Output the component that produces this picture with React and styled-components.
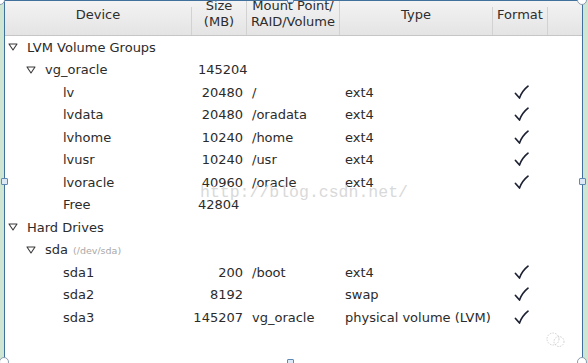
import React from "react";
import styled, { createGlobalStyle } from "styled-components";

const Global = createGlobalStyle`
  html, body { margin: 0; padding: 0; background: #cfe6d3; }
  body { font-family: "DejaVu Sans", "Noto Sans", sans-serif; }
`;

const cols = "187px 55px 93px 153px 55px 1fr";

const Page = styled.div`
  position: relative;
  width: 588px;
  height: 363px;
  background: #cfe6d3;
  padding: 0 5px 0 4px;
  box-sizing: border-box;
  overflow: hidden;
`;

const Panel = styled.div`
  position: relative;
  height: 100%;
  background: #fff;
  border-left: 1px solid #41709c;
  border-right: 1px solid #41709c;
  border-top: 1px solid #41709c;
  box-sizing: border-box;
  overflow: hidden;
`;

const Header = styled.div`
  display: grid;
  grid-template-columns: ${cols};
  grid-template-rows: 34px;
  background: linear-gradient(#f3f3f3, #e4e4e4);
  border-bottom: 1px solid #c6c6c6;
  overflow: hidden;
`;

const HeadCell = styled.div`
  text-align: center;
  font-size: 13px;
  line-height: 16px;
  color: #2d2d2d;
  border-right: ${(p) => (p.$last ? "none" : "1px solid #d2d2d2")};
  white-space: pre;
  margin-top: ${(p) => p.$top ?? 6}px;
`;

const Body = styled.div`
  display: grid;
  grid-auto-rows: 22.5px;
`;

const Row = styled.div`
  display: grid;
  grid-template-columns: ${cols};
  align-items: center;
  font-size: 13px;
  color: #2b2b2b;
`;

const Name = styled.div`
  display: flex;
  align-items: center;
  padding-left: ${(p) => 3 + p.$level * 18}px;
  white-space: nowrap;
`;

const Toggle = styled.svg`
  width: 10px;
  height: 8px;
  margin-right: 9px;
  flex: none;
`;

const Spacer = styled.span`
  display: inline-block;
  width: 19px;
  flex: none;
`;

const Sub = styled.span`
  font-size: 9.5px;
  color: #a8a8a8;
  margin-left: 5px;
  margin-top: 2px;
`;

const Size = styled.div`
  text-align: ${(p) => (p.$left ? "left" : "right")};
  padding: ${(p) => (p.$left ? "0 0 0 6px" : "0 4px 0 0")};
`;

const Mount = styled.div`
  padding-left: 5px;
  white-space: nowrap;
`;

const Type = styled.div`
  padding-left: 5px;
  white-space: nowrap;
`;

const Check = styled.div`
  display: flex;
  justify-content: center;
  padding-left: 1px;
`;

const Watermark = styled.div`
  position: absolute;
  left: 195px;
  top: 182px;
  font-family: "Liberation Mono", monospace;
  font-size: 16.5px;
  color: #d9d9d9;
  pointer-events: none;
`;

const Logo = styled.svg`
  position: absolute;
  left: 540px;
  top: 331px;
`;

const Handle = styled.div`
  position: absolute;
  box-sizing: border-box;
  background: ${(p) => (p.$round ? "#fff" : "#dbe9f6")};
  border: 1px solid ${(p) => (p.$round ? "#8a9bb0" : "#5f88b3")};
  width: ${(p) => (p.$round ? 10 : 7)}px;
  height: ${(p) => (p.$round ? 10 : 7)}px;
  border-radius: ${(p) => (p.$round ? "50%" : "1px")};
  left: ${(p) => p.$x}px;
  top: ${(p) => p.$y}px;
`;

const Tri = () => (
  <Toggle viewBox="0 0 10 8">
    <path d="M1 1 L9 1 L5 7 Z" fill="none" stroke="#3a3a3a" strokeWidth="1.1" strokeLinejoin="round" />
  </Toggle>
);

const Tick = () => (
  <svg width="15" height="15" viewBox="0 0 15 15">
    <path d="M1.5 8.5 L5.5 13 Q8 6 14 1.2" fill="none" stroke="#1d2233" strokeWidth="1.7" strokeLinecap="round" strokeLinejoin="round" />
  </svg>
);

const rows = [
  { level: 0, name: "LVM Volume Groups", open: true },
  { level: 1, name: "vg_oracle", open: true, size: "145204", left: true },
  { level: 2, name: "lv", size: "20480", mount: "/", type: "ext4", fmt: true },
  { level: 2, name: "lvdata", size: "20480", mount: "/oradata", type: "ext4", fmt: true },
  { level: 2, name: "lvhome", size: "10240", mount: "/home", type: "ext4", fmt: true },
  { level: 2, name: "lvusr", size: "10240", mount: "/usr", type: "ext4", fmt: true },
  { level: 2, name: "lvoracle", size: "40960", mount: "/oracle", type: "ext4", fmt: true },
  { level: 2, name: "Free", size: "42804", left: true },
  { level: 0, name: "Hard Drives", open: true },
  { level: 1, name: "sda", open: true, sub: "(/dev/sda)" },
  { level: 2, name: "sda1", size: "200", mount: "/boot", type: "ext4", fmt: true },
  { level: 2, name: "sda2", size: "8192", type: "swap", fmt: true },
  { level: 2, name: "sda3", size: "145207", mount: "vg_oracle", type: "physical volume (LVM)", fmt: true },
];

const App = () => {
  return (
    <>
      <Global />
      <Page>
        <Panel>
          <Header>
            <HeadCell>Device</HeadCell>
            <HeadCell $top={-3}>{"Size\n(MB)"}</HeadCell>
            <HeadCell $top={-3}>{"Mount Point/\nRAID/Volume"}</HeadCell>
            <HeadCell>Type</HeadCell>
            <HeadCell>Format</HeadCell>
            <HeadCell $last $top={0} />
          </Header>
          <Body>
            {rows.map((r, i) => (
              <Row key={i}>
                <Name $level={r.level}>
                  {r.open ? <Tri /> : <Spacer />}
                  {r.name}
                  {r.sub && <Sub>{r.sub}</Sub>}
                </Name>
                <Size $left={r.left}>{r.size}</Size>
                <Mount>{r.mount}</Mount>
                <Type>{r.type}</Type>
                <Check>{r.fmt && <Tick />}</Check>
                <div />
              </Row>
            ))}
          </Body>
          <Watermark>http://blog.csdn.net/</Watermark>
          <Logo width="22" height="16" viewBox="0 0 22 16">
            <circle cx="8" cy="7" r="6" fill="none" stroke="#c4c4c4" strokeWidth="0.8" strokeDasharray="1.5 1.2" />
            <circle cx="14" cy="9.5" r="5" fill="none" stroke="#c4c4c4" strokeWidth="0.8" strokeDasharray="1.5 1.2" />
          </Logo>
        </Panel>
        <Handle $round $x={-5} $y={-5} />
        <Handle $round $x={577} $y={-5} />
        <Handle $round $x={-1} $y={357} />
        <Handle $round $x={577} $y={357} />
        <Handle $x={1} $y={178} />
        <Handle $x={579} $y={178} />
        <Handle $x={287} $y={-4} />
        <Handle $x={287} $y={359} />
      </Page>
    </>
  );
};

export default App;
